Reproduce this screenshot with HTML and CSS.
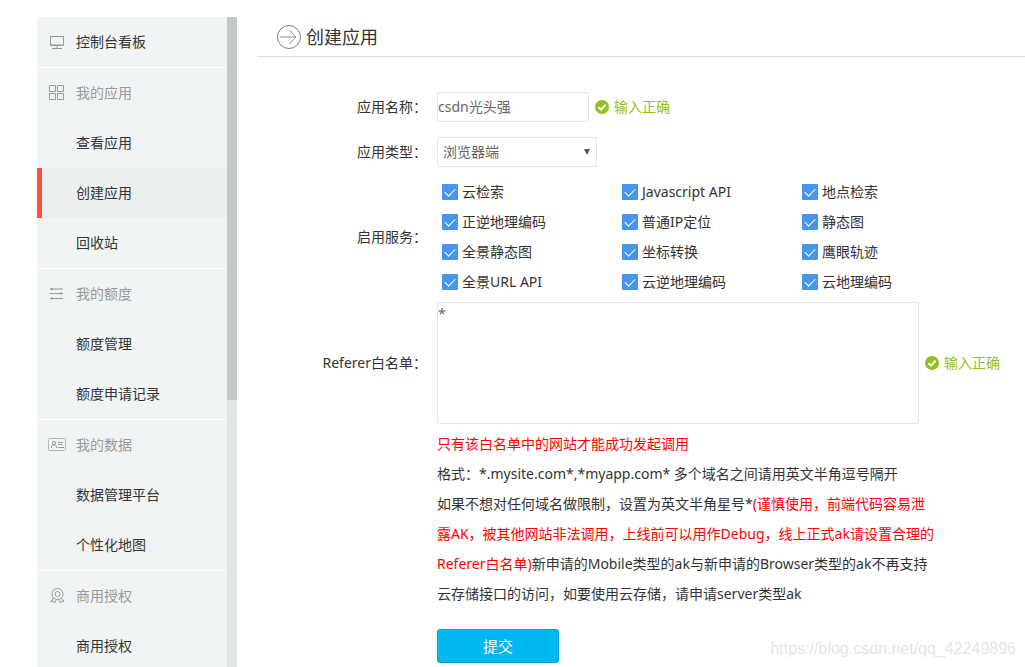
FILE: index.html
```
<!DOCTYPE html>
<html lang="zh-CN">
<head>
<meta charset="utf-8">
<title>创建应用</title>
<link rel="stylesheet" href="styles.css">
</head>
<body>
<svg class="defs" aria-hidden="true">
  <symbol id="ok" viewBox="0 0 14 14">
    <circle cx="7" cy="7" r="7" fill="#8dc21f"/>
    <path d="M3.5 7.2l2.5 2.4 4.6-4.8" fill="none" stroke="#fff" stroke-width="2"/>
  </symbol>
</svg>
<div class="page">
  <aside class="sidebar">
    <nav class="menu">
      <section class="group">
        <a class="item lead" href="#">
          <svg class="icon" viewBox="0 0 20 20"><path d="M3.5 4.500h13v9h-13zM5 16.500h10M10 14v2" /><path d="M4 12.500h12" stroke="#c3c6c4"/></svg>控制台看板</a>
      </section>
      <section class="group">
        <h2 class="item lead heading">
          <svg class="icon" viewBox="0 0 20 20"><path d="M2.500 2.500h6v6h-6zM10.500 2.500h6v6h-6zM2.500 10.500h6v6h-6zM10.500 10.500h6v6h-6z"/></svg>我的应用</h2>
        <a class="item" href="#">查看应用</a>
        <a class="item active" href="#">创建应用</a>
        <a class="item" href="#">回收站</a>
      </section>
      <section class="group">
        <h2 class="item lead heading">
          <svg class="icon" viewBox="0 0 20 20"><path d="M3 5h13M3 9.500h13M3 14.500h13"/><path d="M5.500 3.500v3L3 5zM13.500 8v3l2.500-1.500zM5.500 13v3L3 14.500z" fill="#999" stroke="none"/></svg>我的额度</h2>
        <a class="item" href="#">额度管理</a>
        <a class="item" href="#">额度申请记录</a>
      </section>
      <section class="group">
        <h2 class="item lead heading">
          <svg class="icon" viewBox="0 0 20 20"><rect x="1.500" y="3.500" width="17" height="12" rx="1" stroke="#b5b7b7"/><path d="M11 7.500h5M11 9.500h4M11 12.500h6M4.500 13v-1.500c0-1 1-1.500 2.500-1.500s2.500.5 2.500 1.500V13"/><circle cx="7" cy="8" r="1.600"/></svg>我的数据</h2>
        <a class="item" href="#">数据管理平台</a>
        <a class="item" href="#">个性化地图</a>
      </section>
      <section class="group">
        <h2 class="item lead heading">
          <svg class="icon" viewBox="0 0 20 20"><circle cx="10.500" cy="8" r="5.500"/><circle cx="10.500" cy="8" r="2.500"/><path d="M6.500 12l-2.500 3.500 2.500-.3 1 1.800 2-3.500M14.500 12l2.500 3.500-2.500-.3-1 1.800-2-3.500"/></svg>商用授权</h2>
        <a class="item" href="#">商用授权</a>
      </section>
    </nav>
    <div class="track"><div class="thumb"></div></div>
  </aside>

  <main class="main">
    <header class="title">
      <svg class="arrow" viewBox="0 0 24 24"><circle cx="12" cy="12" r="11.500" stroke="#75808c"/><path d="M3 12h16M12.500 5l6.500 7-6.500 7" stroke="#8994a0"/></svg>
      <h1>创建应用</h1>
    </header>
    <form class="form">
      <div class="row">
        <label class="label" for="name">应用名称：</label>
        <div class="field">
          <input class="text" id="name" type="text" value="csdn光头强">
          <span class="valid"><svg class="ok"><use href="#ok"/></svg>输入正确</span>
        </div>
      </div>

      <div class="row">
        <label class="label" for="type">应用类型：</label>
        <div class="select">
          <select id="type"><option>浏览器端</option></select>
          <svg class="caret" viewBox="0 0 6 6"><path d="M0 0h6L3 6z" fill="#555"/></svg>
        </div>
      </div>

      <div class="row options">
        <span class="label" id="services">启用服务：</span>
        <div class="services" role="group" aria-labelledby="services">
          <label class="check"><input type="checkbox" checked>云检索</label>
          <label class="check"><input type="checkbox" checked>Javascript API</label>
          <label class="check"><input type="checkbox" checked>地点检索</label>
          <label class="check"><input type="checkbox" checked>正逆地理编码</label>
          <label class="check"><input type="checkbox" checked>普通IP定位</label>
          <label class="check"><input type="checkbox" checked>静态图</label>
          <label class="check"><input type="checkbox" checked>全景静态图</label>
          <label class="check"><input type="checkbox" checked>坐标转换</label>
          <label class="check"><input type="checkbox" checked>鹰眼轨迹</label>
          <label class="check"><input type="checkbox" checked>全景URL API</label>
          <label class="check"><input type="checkbox" checked>云逆地理编码</label>
          <label class="check"><input type="checkbox" checked>云地理编码</label>
        </div>
      </div>

      <div class="row whitelist">
        <label class="label" for="referer">Referer白名单：</label>
        <div class="field">
          <textarea class="text area" id="referer">*</textarea>
          <span class="valid"><svg class="ok"><use href="#ok"/></svg>输入正确</span>
        </div>
      </div>

      <div class="row">
        <div class="help">
          <p class="warn">只有该白名单中的网站才能成功发起调用</p>
          <p>格式：*.mysite.com*,*myapp.com* 多个域名之间请用英文半角逗号隔开</p>
          <p>如果不想对任何域名做限制，设置为英文半角星号*<span class="warn">(谨慎使用，前端代码容易泄露AK，被其他网站非法调用，上线前可以用作Debug，线上正式ak请设置合理的Referer白名单)</span>新申请的Mobile类型的ak与新申请的Browser类型的ak不再支持云存储接口的访问，如要使用云存储，请申请server类型ak</p>
          <button class="submit" type="submit">提交</button>
        </div>
      </div>
    </form>
  </main>
</div>
<div class="watermark">https://blog.csdn.net/qq_42249896</div>
</body>
</html>
```
FILE: styles.css
```
* { box-sizing: border-box; }

body {
  margin: 0;
  background: #fff;
  color: #333;
  font: 14px/30px "Noto Sans", "Noto Sans CJK SC", sans-serif;
}

h1, h2, p { margin: 0; font-weight: 400; }

.defs { display: none; }

.page {
  display: flex;
  gap: 20px;
  height: 100vh;
  padding: 17px 0 0 37px;
  overflow: hidden;
}

/* sidebar */
.sidebar {
  display: flex;
  flex: 0 0 200px;
  overflow: hidden;
}
.menu { flex: 1; background: #f0f4f5; }
.group + .group { border-top: 1px solid #fff; }
.item {
  display: flex;
  align-items: center;
  height: 50px;
  padding-left: 39px;
  color: #333;
  font-size: 14px;
  text-decoration: none;
}
.lead { gap: 9px; padding-left: 10px; }
.heading { color: #999; }
.active {
  padding-left: 34px;
  border-left: 5px solid #ff4d43;
  background: #ebefef;
}
.icon {
  width: 20px;
  height: 20px;
  fill: none;
  stroke: #999;
}
.track { width: 10px; background: #e2e6e7; }
.thumb { height: 383px; background: #c4c8c9; }

/* content */
.main { flex: 1; min-width: 0; }
.title {
  display: flex;
  align-items: center;
  gap: 5px;
  height: 40px;
  padding-left: 20px;
  border-bottom: 1px solid #ddd;
}
.title h1 { font-size: 18px; line-height: 36px; }
.arrow { width: 24px; height: 24px; fill: none; }

.form { padding-top: 35px; }
.row {
  display: grid;
  grid-template-columns: 170px 1fr;
  column-gap: 10px;
  align-items: center;
  margin-bottom: 15px;
}
.options { margin: -5px 0 5px; }
.whitelist { margin-bottom: 5px; }
.label { text-align: right; }
.field { display: flex; align-items: center; gap: 6px; }

.text, .select select {
  border: 1px solid #e1e6ed;
  border-radius: 2px;
  background: #fff;
  color: #666;
  font: inherit;
}
.text { width: 152px; height: 30px; padding: 0; }
.area {
  width: 482px;
  height: 122px;
  line-height: 22px;
  resize: none;
}
.select { display: grid; align-items: center; width: 160px; }
.select select {
  grid-area: 1 / 1;
  height: 30px;
  padding: 0 5px;
  line-height: 28px;
  appearance: none;
}
.caret {
  grid-area: 1 / 1;
  justify-self: end;
  width: 6px;
  height: 6px;
  margin-right: 7px;
  pointer-events: none;
}

.valid { display: flex; align-items: center; gap: 5px; color: #8dc21f; }
.ok { width: 14px; height: 14px; }

.services { display: grid; grid-template-columns: repeat(3, 180px); }
.check { display: flex; align-items: center; gap: 4px; padding-left: 5px; }
.check input {
  width: 16px;
  height: 16px;
  margin: 0;
  border-radius: 1px;
  background: #4696ec;
  appearance: none;
  display: grid;
  place-items: center;
}
.check input:checked::before {
  content: "";
  width: 9px;
  height: 5px;
  margin-bottom: 3px;
  border: solid #fff;
  border-width: 0 0 1px 1px;
  transform: rotate(-45deg);
}

.help { grid-column: 2; max-width: 500px; }
.warn { color: #f00; }

.submit {
  display: block;
  width: 122px;
  height: 34px;
  margin-top: 20px;
  padding: 0;
  border: 1px solid #00a2e2;
  border-radius: 3px;
  background: #00b7f0;
  color: #fff;
  font: inherit;
  font-size: 15px;
}

.watermark {
  position: absolute;
  right: 9px;
  bottom: 3px;
  color: #e6e6e6;
  font: 16px/30px "Liberation Sans", sans-serif;
}
```
